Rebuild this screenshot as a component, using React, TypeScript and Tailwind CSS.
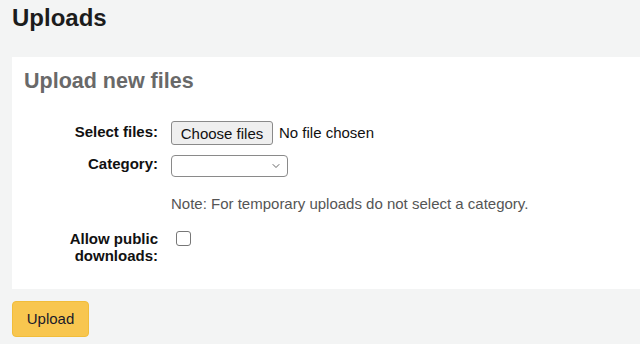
import { ChevronDown } from 'lucide-react';

// Upload form page: title, white fieldset panel, yellow submit button.

type RowProps = {
  label: string;
  children: React.ReactNode;
  className?: string;
};

function FormRow({ label, children, className = '' }: RowProps) {
  return (
    <div className={`flex items-start ${className}`}>
      <div className="w-[147px] shrink-0 pr-[13px] text-right text-[15px] font-bold leading-[17px] text-[#111]">
        {label}
      </div>
      <div className="flex-1">{children}</div>
    </div>
  );
}

export default function App() {
  return (
    <div
      className="min-h-screen bg-[#f3f4f4] pl-3 pb-[7px]"
      style={{ fontFamily: '"Liberation Sans", Arial, sans-serif' }}
    >
      <h1 className="pt-[3px] text-[24px] font-bold leading-[29px] text-[#1c1c1c]">Uploads</h1>

      <div className="mt-[25px] bg-white px-3 pt-3 pb-[25px]">
        <h2 className="text-[21.5px] font-bold leading-[25px] text-[#696969]">Upload new files</h2>

        <div className="mt-[29px]">
          <FormRow label="Select files:">
            <div className="-mt-[2px] flex items-center">
              <span className="inline-flex h-[24px] w-[102px] items-center justify-center rounded-[3px] border border-[#8a8a8a] bg-[#efefef] text-[15px] leading-none text-[#111]">
                Choose files
              </span>
              <span className="ml-[6px] text-[15px] text-[#111]">No file chosen</span>
            </div>
          </FormRow>

          <FormRow label="Category:" className="mt-[10px]">
            <div className="flex h-[22px] w-[117px] items-center justify-end rounded-[4px] border border-[#8a8a8a] bg-white pr-[5px]">
              <ChevronDown size={12} strokeWidth={1.5} className="text-[#333]" />
            </div>
          </FormRow>

          <div className="mt-[18px] pl-[147px] text-[15px] leading-[17px] text-[#555]">
            Note: For temporary uploads do not select a category.
          </div>

          <FormRow label="Allow public downloads:" className="mt-[18px]">
            <span className="ml-[5px] mt-[1px] block h-[15px] w-[15px] rounded-[3px] border border-[#777] bg-white" />
          </FormRow>
        </div>
      </div>

      <button
        type="button"
        className="mt-[12px] h-[36px] w-[77px] rounded-[4px] border border-[#f1bd3a] bg-[#f8c64f] text-[15px] text-[#1a1a2a]"
      >
        Upload
      </button>
    </div>
  );
}
